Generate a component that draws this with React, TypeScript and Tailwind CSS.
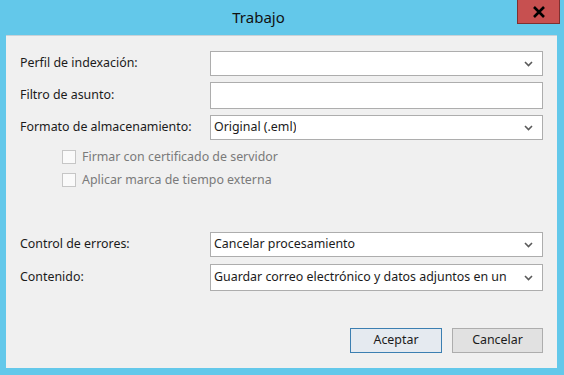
import React from "react";

const font = { fontFamily: '"Noto Sans", "Open Sans", sans-serif' };

function Chevron() {
  return (
    <svg width="9" height="6" viewBox="0 0 9 6" className="shrink-0">
      <path d="M1 1 L4.5 4.5 L8 1" fill="none" stroke="#5a5a5a" strokeWidth="1.6" />
    </svg>
  );
}

function Select({ value, tall }: { value?: string; tall?: boolean }) {
  return (
    <div
      className={`w-[333px] ${tall ? "h-[27px]" : "h-[25px]"} bg-white border border-[#adadad] flex items-center pl-[3px] pr-[9px] justify-between`}
    >
      <span className="text-[12.4px] text-[#1b1b1b] whitespace-nowrap overflow-hidden">{value ?? ""}</span>
      <Chevron />
    </div>
  );
}

function Row({ label, children, className = "" }: { label: string; children: React.ReactNode; className?: string }) {
  return (
    <div className={`flex items-center ${className}`}>
      <div className="w-[190px] text-[12.4px] text-[#1b1b1b]">{label}</div>
      {children}
    </div>
  );
}

function Check({ label, className = "" }: { label: string; className?: string }) {
  return (
    <div className={`flex items-center h-[14px] pl-[42px] ${className}`}>
      <div className="w-[14px] h-[14px] border border-[#c6c6c6] bg-[#fafafa]" />
      <span className="ml-[6px] text-[12.4px] leading-[14px] text-[#7a7a7a]">{label}</span>
    </div>
  );
}

export default function App() {
  return (
    <div className="w-[564px] h-[375px] bg-[#63c8ea] flex flex-col overflow-hidden" style={font}>
      <div className="h-[35px] flex items-start relative">
        <div className="w-[517px] text-center text-[15px] text-[#111] pt-[6px]">Trabajo</div>
        <div className="w-[43px] h-[24px] bg-[#c75050] border border-[#7e3030] border-t-0 flex items-center justify-center">
          <svg width="14" height="12" viewBox="0 0 14 12">
            <path d="M2 1 L12 11 M12 1 L2 11" stroke="#000" strokeWidth="2.6" />
          </svg>
        </div>
      </div>
      <div className="mx-[6px] mr-[7px] h-[333px] bg-[#f0f0f0] border-t border-[#c9d2d8] pl-[14px] pr-[14px] pt-[15px]">
        <Row label="Perfil de indexación:">
          <Select />
        </Row>
        <Row label="Filtro de asunto:" className="mt-[6px]">
          <div className="w-[333px] h-[27px] bg-white border border-[#adadad]" />
        </Row>
        <Row label="Formato de almacenamiento:" className="mt-[6px]">
          <Select value="Original (.eml)" />
        </Row>
        <Check label="Firmar con certificado de servidor" className="mt-[10px]" />
        <Check label="Aplicar marca de tiempo externa" className="mt-[9px]" />
        <Row label="Control de errores:" className="mt-[45px]">
          <Select value="Cancelar procesamiento" />
        </Row>
        <Row label="Contenido:" className="mt-[7px]">
          <Select value="Guardar correo electrónico y datos adjuntos en un" tall />
        </Row>
        <div className="flex justify-end gap-[10px] mt-[37px]">
          <button className="w-[92px] h-[25px] border border-[#3c7fb1] bg-[#e5eaf0] text-[12.4px] text-[#1b1b1b]">Aceptar</button>
          <button className="w-[91px] h-[25px] border border-[#adadad] bg-[#e1e1e1] text-[12.4px] text-[#1b1b1b]">Cancelar</button>
        </div>
      </div>
    </div>
  );
}
